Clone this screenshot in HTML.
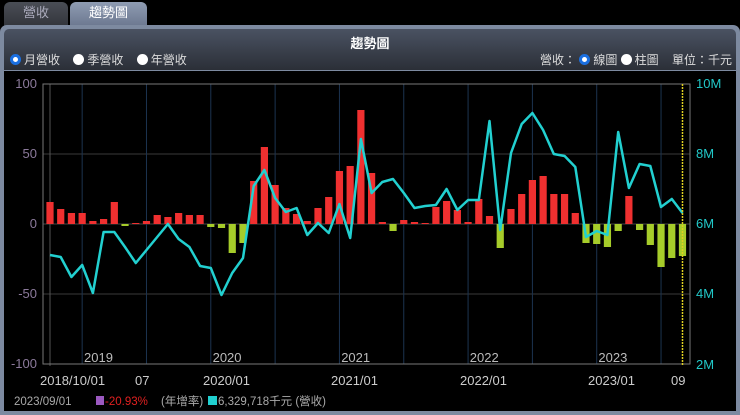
<!DOCTYPE html>
<html><head><meta charset="utf-8">
<style>
*{margin:0;padding:0;box-sizing:border-box}
body{width:740px;height:415px;background:#000;overflow:hidden;font-family:"Liberation Sans","Noto Sans CJK TC",sans-serif;position:relative}
.tab{position:absolute;top:2px;height:24px;border-radius:6px 6px 0 0;color:#ccd;font-size:13px;text-align:center;line-height:22px}
.t1{left:4px;width:64px;background:linear-gradient(#4a4e56,#33363c);color:#aab}
.t2{left:70px;width:77px;background:linear-gradient(#8f9cb2,#6c7890);color:#fff}
.panel{position:absolute;left:0;top:25px;width:740px;height:390px;background:#7d8aa0;border-radius:7px 7px 0 0}
.head{position:absolute;left:4px;top:4px;width:732px;height:41px;background:linear-gradient(#4a5262,#2b2f37);border-radius:5px 5px 0 0}
.title{position:absolute;left:0;width:100%;top:4px;text-align:center;color:#fff;font-size:13px;font-weight:bold}
.opt{position:absolute;top:22px;color:#ddd;font-size:12px;white-space:nowrap}
.r{display:inline-block;width:11px;height:11px;border-radius:50%;background:#fff;vertical-align:-1px;margin-right:3px}
.r.on{background:#fff;border:3px solid #1a6fe0;background:#fff}
</style></head><body>
<div class="tab t1">營收</div>
<div class="tab t2">趨勢圖</div>
<div class="panel">
 <div class="head">
  <div class="title">趨勢圖</div>
  <div class="opt" style="left:6px"><span class="r on"></span>月營收 &nbsp;&nbsp;&nbsp;<span class="r"></span>季營收 &nbsp;&nbsp;&nbsp;<span class="r"></span>年營收</div>
  <div class="opt" style="right:4px">營收： <span class="r on"></span>線圖 <span class="r"></span>柱圖 &nbsp;&nbsp;&nbsp;單位：千元</div>
 </div>
</div>
<svg id="s" width="740" height="415" style="position:absolute;left:0;top:0" font-family="Liberation Sans, Noto Sans CJK TC, sans-serif"></svg>
<script>
var bars=[22,15,11,11,3,5,22,-2,1,3,9,7,11,9,9,-3,-4,-29,-19,43,77,39,16,10,3,16,27,53,58,114,51,2,-7,4,2,1,17,23,14,2,25,8,-24,15,30,44,48,30,30,11,-19,-20,-23,-7,28,-6,-21,-43,-34,-32];
var ln=[255,257,277,265,293,232,232,247,263,250,237,224,239,247,266,268,295,273,258,186,170,198,212,208,235,223,233,204,238,139,193,182,179,193,208,206,205,189,210,200,200,121,230,153,124,113,130,154,156,167,237,231,235,132,188,164,166,207,199,213];
var h='';
h+='<rect x="4" y="71" width="732" height="340" fill="#000"/>';
[154,294].forEach(function(y){h+='<line x1="43" x2="690" y1="'+y+'" y2="'+y+'" stroke="#3a3a3a"/>';});
h+='<line x1="43" x2="690" y1="224" y2="224" stroke="#444"/>';
for(var m=3;m<60;m+=6){var x=50+10.72*m;h+='<line x1="'+x+'" x2="'+x+'" y1="84" y2="364" stroke="#1c3350"/>';}
h+='<line x1="50" x2="50" y1="84" y2="366" stroke="#555"/>';
h+='<rect x="43" y="84" width="647" height="280" fill="none" stroke="#777"/>';
for(var i=0;i<60;i++){var x=50+10.72*i,v=bars[i];
 if(v>=0)h+='<rect x="'+(x-3.6)+'" y="'+(224-v)+'" width="7.2" height="'+v+'" fill="#f03030"/>';
 else h+='<rect x="'+(x-3.6)+'" y="224" width="7.2" height="'+(-v)+'" fill="#a6cc2a"/>';}
var p=ln.map(function(y,i){return (50+10.72*i).toFixed(1)+','+y}).join(' ');
h+='<polyline points="'+p+'" fill="none" stroke="#22d0d0" stroke-width="2.5" stroke-linejoin="round"/>';
h+='<line x1="682.5" x2="682.5" y1="84" y2="366" stroke="#e0d020" stroke-width="1.5" stroke-dasharray="2,1"/>';
function t(x,y,s,c,a,sz){h+='<text x="'+x+'" y="'+y+'" fill="'+c+'" font-size="'+(sz||13)+'" text-anchor="'+(a||'start')+'">'+s+'</text>';}
t(37,88,'100','#8c7a9c','end');t(37,158,'50','#8c7a9c','end');t(37,228,'0','#8c7a9c','end');t(37,298,'-50','#8c7a9c','end');t(37,368,'-100','#8c7a9c','end');
t(696,88,'10M','#22c8c8');t(696,158,'8M','#22c8c8');t(696,228,'6M','#22c8c8');t(696,298,'4M','#22c8c8');t(696,369,'2M','#22c8c8');
['2019','2020','2021','2022','2023'].forEach(function(s,k){t(84+128.6*k,362,s,'#bbb','start');});
t(40,385,'2018/10/01','#ccc');t(135,385,'07','#ccc');t(203,385,'2020/01','#ccc');t(331,385,'2021/01','#ccc');t(460,385,'2022/01','#ccc');t(588,385,'2023/01','#ccc');t(671,385,'09','#ccc');
h+='<text x="14" y="405" font-size="11.5" fill="#aaa">2023/09/01</text>';
h+='<rect x="96" y="396" width="8" height="9" fill="#9b59c0"/><text x="105" y="405" font-size="11.5" fill="#e02020">-20.93%</text><text x="161" y="405" font-size="11.5" fill="#aaa">(年增率)</text>';
h+='<rect x="208" y="396" width="9" height="9" fill="#20d0d0"/><text x="218" y="405" font-size="11.5" fill="#aaa">6,329,718千元 (營收)</text>';
document.getElementById('s').innerHTML=h;
</script>
</body></html>
